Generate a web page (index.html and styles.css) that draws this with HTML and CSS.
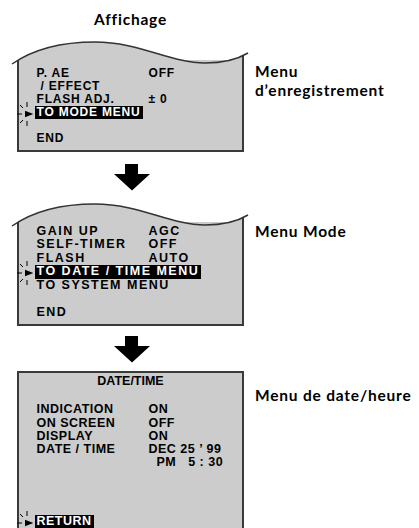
FILE: index.html
```html
<!DOCTYPE html>
<html lang="fr">
<head>
    <meta charset="UTF-8">
    <title>Affichage</title>
    <link rel="stylesheet" href="styles.css">
</head>
<body>
    <div class="page">
        <div class="title">Affichage</div>

        <!-- Menu d'enregistrement -->
        <div class="step step-rec">
            <div class="screen screen-rec">
                <svg class="wave" width="242" height="30" viewBox="0 0 242 30">
                    <clipPath id="below1"><path d="M2,26 C25,10 55,4 85,4 C130,4 160,25 195,25 C215,25 228,21 238,15 L238,40 L2,40 Z"/></clipPath>
                    <g clip-path="url(#below1)">
                        <rect x="7" y="0" width="227" height="30" fill="#cccccc"/>
                        <rect x="7" y="0" width="2" height="30" fill="#3a3a3a"/>
                        <rect x="232" y="0" width="2" height="30" fill="#3a3a3a"/>
                    </g>
                    <path d="M2,26 C25,10 55,4 85,4 C130,4 160,25 195,25 C215,25 228,21 238,15" fill="none" stroke="#333" stroke-width="1.5"/>
                </svg>
                <div class="row"><span class="key">P. AE</span><span>OFF</span></div>
                <div class="row indent">/ EFFECT</div>
                <div class="row"><span class="key">FLASH ADJ.</span><span>± 0</span></div>
                <div class="row">
                    <svg class="cursor" width="20" height="28" viewBox="0 0 20 28">
                        <polygon points="10,10.7 18.3,14 10,17.3" fill="#000"/>
                        <g stroke="#000" stroke-width="1">
                            <line x1="2" y1="14" x2="7" y2="14"/>
                            <line x1="12" y1="2" x2="12" y2="7"/>
                            <line x1="12" y1="21" x2="12" y2="26"/>
                            <line x1="5" y1="5" x2="8" y2="8"/>
                            <line x1="5" y1="23" x2="8" y2="20"/>
                        </g>
                    </svg>
                    <span class="hl">TO MODE MENU</span>
                </div>
                <div class="row">&nbsp;</div>
                <div class="row">END</div>
            </div>
            <div class="label label-rec">Menu<br>d’enregistrement</div>
        </div>

        <div class="arrow arrow-one">
            <svg width="36" height="27" viewBox="0 0 36 27"><polygon points="11,0 24,0 24,10 36,10 18,26.5 0,10 11,10" fill="#000"/></svg>
        </div>

        <!-- Menu Mode -->
        <div class="step step-mode">
            <div class="screen screen-mode">
                <svg class="wave" width="242" height="30" viewBox="0 0 242 30">
                    <clipPath id="below2"><path d="M2,26 C25,10 55,4 85,4 C130,4 160,25 195,25 C215,25 228,21 238,15 L238,40 L2,40 Z"/></clipPath>
                    <g clip-path="url(#below2)">
                        <rect x="7" y="0" width="227" height="30" fill="#cccccc"/>
                        <rect x="7" y="0" width="2" height="30" fill="#3a3a3a"/>
                        <rect x="232" y="0" width="2" height="30" fill="#3a3a3a"/>
                    </g>
                    <path d="M2,26 C25,10 55,4 85,4 C130,4 160,25 195,25 C215,25 228,21 238,15" fill="none" stroke="#333" stroke-width="1.5"/>
                </svg>
                <div class="row"><span class="key">GAIN UP</span><span>AGC</span></div>
                <div class="row"><span class="key">SELF-TIMER</span><span>OFF</span></div>
                <div class="row"><span class="key">FLASH</span><span>AUTO</span></div>
                <div class="row">
                    <svg class="cursor" width="20" height="28" viewBox="0 0 20 28">
                        <polygon points="10,10.7 18.3,14 10,17.3" fill="#000"/>
                        <g stroke="#000" stroke-width="1">
                            <line x1="2" y1="14" x2="7" y2="14"/>
                            <line x1="12" y1="2" x2="12" y2="7"/>
                            <line x1="12" y1="21" x2="12" y2="26"/>
                            <line x1="5" y1="5" x2="8" y2="8"/>
                            <line x1="5" y1="23" x2="8" y2="20"/>
                        </g>
                    </svg>
                    <span class="hl">TO DATE / TIME MENU</span>
                </div>
                <div class="row">TO SYSTEM MENU</div>
                <div class="row">&nbsp;</div>
                <div class="row">END</div>
            </div>
            <div class="label label-mode">Menu Mode</div>
        </div>

        <div class="arrow arrow-two">
            <svg width="36" height="27" viewBox="0 0 36 27"><polygon points="11,0 24,0 24,10 36,10 18,26.5 0,10 11,10" fill="#000"/></svg>
        </div>

        <!-- Menu de date/heure -->
        <div class="step step-date">
            <div class="screen screen-date">
                <div class="date-title">DATE/TIME</div>
                <div class="date-rows">
                    <div class="row"><span class="key">INDICATION</span><span>ON</span></div>
                    <div class="row"><span class="key">ON SCREEN</span><span>OFF</span></div>
                    <div class="row"><span class="key">DISPLAY</span><span>ON</span></div>
                    <div class="row"><span class="key">DATE / TIME</span><span>DEC 25 ’ 99</span></div>
                    <div class="row"><span class="key"></span><span class="time">PM   5 : 30</span></div>
                </div>
                <div class="row return-row">
                    <svg class="cursor" width="20" height="28" viewBox="0 0 20 28">
                        <polygon points="10,10.7 18.3,14 10,17.3" fill="#000"/>
                        <g stroke="#000" stroke-width="1">
                            <line x1="2" y1="14" x2="7" y2="14"/>
                            <line x1="12" y1="2" x2="12" y2="7"/>
                            <line x1="12" y1="21" x2="12" y2="26"/>
                            <line x1="5" y1="5" x2="8" y2="8"/>
                            <line x1="5" y1="23" x2="8" y2="20"/>
                        </g>
                    </svg>
                    <span class="hl">RETURN</span>
                </div>
            </div>
            <div class="label label-date">Menu de date/heure</div>
        </div>
    </div>
</body>
</html>
```

FILE: styles.css
```css
body {
    margin: 0;
    background-color: #fff;
    color: #000;
    font-family: "Liberation Sans", Arial, sans-serif;
    font-weight: bold;
}
.page {
    padding-top: 10px;
}
.title {
    width: 227px;
    margin-left: 17px;
    text-align: center;
    font: bold 15.5px/18.6px Lato, sans-serif;
    letter-spacing: 0.8px;
}
.step {
    display: flex;
    align-items: flex-start;
}
.step-rec {
    margin-top: 31.4px;
}
.step-mode {
    margin-top: 31px;
}
.step-date {
    margin-top: 8px;
}
/* grey camcorder screen */
.screen {
    position: relative;
    box-sizing: border-box;
    width: 227px;
    margin-left: 17px;
    padding-left: 17.5px;
    background-color: #cccccc;
    border: 2px solid #3a3a3a;
    border-top: none;
}
.wave {
    position: absolute;
    left: -9px;
    top: -22px;
}
.row {
    position: relative;
    display: flex;
    white-space: pre;
}
.key {
    flex: none;
    width: 112px;
}
.indent {
    padding-left: 4px;
}
.hl {
    background-color: #000;
    color: #fff;
    margin-left: -2px;
    padding: 0 2px;
}
.cursor {
    position: absolute;
    left: -21.5px;
    top: -6px;
}
.screen-rec {
    padding-top: 7.2px;
    padding-bottom: 4.8px;
    font-size: 12px;
    line-height: 13px;
    letter-spacing: 0.8px;
}
.screen-mode {
    padding-top: 2.6px;
    padding-bottom: 4.9px;
    font-size: 12.5px;
    line-height: 13.5px;
    letter-spacing: 1.5px;
}
.screen-date {
    border-top: 2px solid #3a3a3a;
    padding-top: 2px;
    padding-bottom: 12px;
    font-size: 12.5px;
    line-height: 13.3px;
    letter-spacing: 0.5px;
}
.date-title {
    margin-left: -17.5px;
    text-align: center;
    letter-spacing: 0;
}
.date-rows {
    margin-top: 15px;
}
.time {
    padding-left: 8px;
}
.return-row {
    margin-top: 45px;
}
.arrow {
    margin-left: 114px;
    height: 27px;
}
.arrow svg {
    display: block;
}
.arrow-one {
    margin-top: 12px;
}
.arrow-two {
    margin-top: 10px;
}
.label {
    margin-left: 11px;
    font: bold 15.5px/18.6px Lato, sans-serif;
    letter-spacing: 0.8px;
}
.label-rec {
    margin-top: 2.5px;
}
.label-mode {
    margin-top: -0.2px;
}
.label-date {
    margin-top: 14.8px;
}
```
